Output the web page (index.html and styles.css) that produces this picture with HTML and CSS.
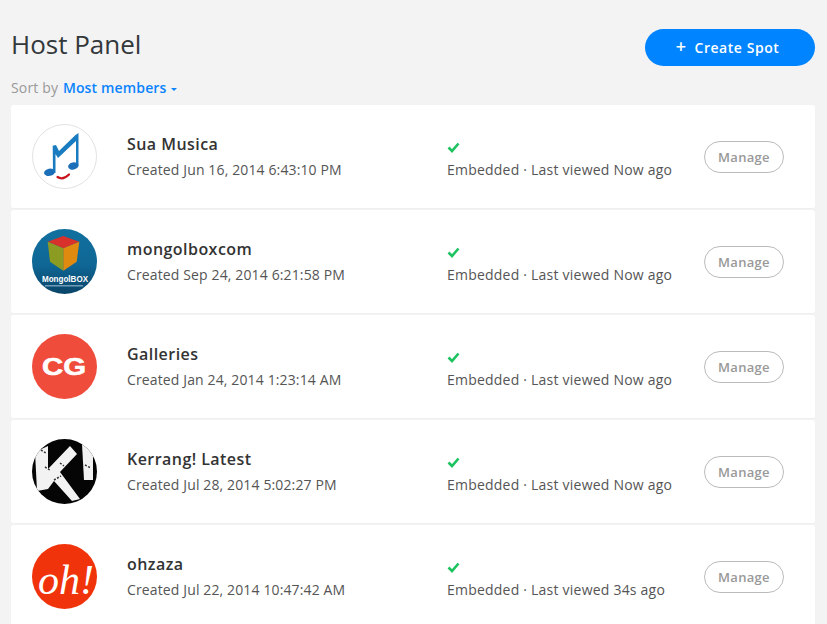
FILE: index.html
```html
<!DOCTYPE html>
<html lang="en">
<head>
<meta charset="utf-8">
<title>Host Panel</title>
<link rel="stylesheet" href="styles.css">
</head>
<body>
<main class="page">
  <header class="top">
    <h1 class="title">Host Panel</h1>
    <button class="create"><span class="plus">+</span>Create Spot</button>
  </header>
  <div class="sort">Sort by <a class="sort-link">Most members</a><span class="caret"></span></div>
  <ul class="list">
    <li class="card">
      <svg class="avatar" viewBox="0 0 65 65">
        <circle cx="32.5" cy="32.5" r="32" fill="#fff" stroke="#e2e2e2"/>
        <path d="M20.700 21.700 L24 21 L27 27 L43.500 11 L46.500 9 L46.500 42 L44 42 L44 17 L26 34 L23.500 30 L23.500 49 L21 49 Z" fill="#1a7cc0"/>
        <ellipse cx="17.500" cy="48.300" rx="5.500" ry="3.600" fill="#1a6fb8" transform="rotate(-10 17.500 48.300)"/>
        <ellipse cx="41.300" cy="42" rx="5.200" ry="3.600" fill="#1a6fb8" transform="rotate(-10 41.300 42)"/>
        <path d="M25.500 53 Q31 56.500 37 50.500" fill="none" stroke="#c8141c" stroke-width="2.200" stroke-linecap="round"/>
      </svg>
      <div class="info"><h2 class="name">Sua Musica</h2><p class="meta">Created Jun 16, 2014 6:43:10 PM</p></div>
      <div class="status"><svg class="check" viewBox="0 0 13 11"><path d="M1.500 5.500 L5 9 L11.500 1.500" fill="none" stroke="#1cc35f" stroke-width="2.600"/></svg><p class="meta">Embedded · Last viewed Now ago</p></div>
      <button class="manage">Manage</button>
    </li>
    <li class="card">
      <svg class="avatar" viewBox="0 0 65 65">
        <defs><linearGradient id="mb" x1="0" y1="0" x2="0" y2="1"><stop offset="0" stop-color="#11709f"/><stop offset="0.55" stop-color="#0f6795"/><stop offset="1" stop-color="#0a4468"/></linearGradient></defs>
        <circle cx="32.500" cy="32.500" r="32.500" fill="url(#mb)"/>
        <path d="M15.700 12.700 L31.300 7 L47.300 12.700 L31.300 19.300 Z" fill="#d8302a"/>
        <path d="M15.700 12.700 L31.300 19.300 L31.300 41.700 L18 32.700 Z" fill="#8c9c22"/>
        <path d="M31.300 19.300 L47.300 12.700 L44.700 32.700 L31.300 41.700 Z" fill="#e08a10"/>
        <text class="logo-mb" x="33" y="52.500" text-anchor="middle" textLength="46" lengthAdjust="spacingAndGlyphs">MongolBOX</text>
        <rect x="13" y="56" width="38" height="1.500" fill="#6f9db8"/>
      </svg>
      <div class="info"><h2 class="name">mongolboxcom</h2><p class="meta">Created Sep 24, 2014 6:21:58 PM</p></div>
      <div class="status"><svg class="check" viewBox="0 0 13 11"><path d="M1.500 5.500 L5 9 L11.500 1.500" fill="none" stroke="#1cc35f" stroke-width="2.600"/></svg><p class="meta">Embedded · Last viewed Now ago</p></div>
      <button class="manage">Manage</button>
    </li>
    <li class="card">
      <svg class="avatar" viewBox="0 0 65 65">
        <circle cx="32.500" cy="32.500" r="32.500" fill="#ef4c3c"/>
        <text class="logo-cg" x="32" y="41" text-anchor="middle" textLength="44" lengthAdjust="spacingAndGlyphs">CG</text>
      </svg>
      <div class="info"><h2 class="name">Galleries</h2><p class="meta">Created Jan 24, 2014 1:23:14 AM</p></div>
      <div class="status"><svg class="check" viewBox="0 0 13 11"><path d="M1.500 5.500 L5 9 L11.500 1.500" fill="none" stroke="#1cc35f" stroke-width="2.600"/></svg><p class="meta">Embedded · Last viewed Now ago</p></div>
      <button class="manage">Manage</button>
    </li>
    <li class="card">
      <svg class="avatar" viewBox="0 0 65 65">
        <defs><clipPath id="kc"><circle cx="32.500" cy="32.500" r="32.500"/></clipPath></defs>
        <g clip-path="url(#kc)">
          <rect width="65" height="65" fill="#050505"/>
          <path d="M3 13 L16 7 L16 30 L38 7 L45 15 L28 33 L48 60 L40 62 L22 42 L16 50 L5 52 Z" fill="#f2f2f2"/>
          <path d="M50 5 L61 5 L61 41 L52 41 Z" fill="#f2f2f2"/>
          <path d="M9 11 L14 14 M13 28 L18 31 M28 24 L32 27 M22 41 L29 37 M53 26 L59 29" stroke="#333" stroke-width="1.500" stroke-dasharray="2 1.500"/>
        </g>
      </svg>
      <div class="info"><h2 class="name">Kerrang! Latest</h2><p class="meta">Created Jul 28, 2014 5:02:27 PM</p></div>
      <div class="status"><svg class="check" viewBox="0 0 13 11"><path d="M1.500 5.500 L5 9 L11.500 1.500" fill="none" stroke="#1cc35f" stroke-width="2.600"/></svg><p class="meta">Embedded · Last viewed Now ago</p></div>
      <button class="manage">Manage</button>
    </li>
    <li class="card">
      <svg class="avatar" viewBox="0 0 65 65">
        <circle cx="32.500" cy="32.500" r="32.500" fill="#f0330a"/>
        <text class="logo-oh" x="6" y="50">oh!</text>
      </svg>
      <div class="info"><h2 class="name">ohzaza</h2><p class="meta">Created Jul 22, 2014 10:47:42 AM</p></div>
      <div class="status"><svg class="check" viewBox="0 0 13 11"><path d="M1.500 5.500 L5 9 L11.500 1.500" fill="none" stroke="#1cc35f" stroke-width="2.600"/></svg><p class="meta">Embedded · Last viewed 34s ago</p></div>
      <button class="manage">Manage</button>
    </li>
  </ul>
</main>
</body>
</html>
```
FILE: styles.css
```css
* { box-sizing: border-box; }
html, body { margin: 0; height: 100%; overflow: hidden; }
body {
  background: #f3f3f3;
  font-family: "Open Sans", "Liberation Sans", sans-serif;
  color: #333;
}
.page { padding: 29px 12px 0 11px; }
.top {
  display: flex;
  justify-content: space-between;
  align-items: flex-start;
  height: 37px;
}
.title {
  margin: 0;
  font-size: 26px;
  font-weight: 400;
  color: #33383b;
  line-height: 30px;
}
.create {
  width: 170px;
  height: 37px;
  border: 0;
  border-radius: 19px;
  background: #0084ff;
  color: #fff;
  font: 600 14px "Open Sans", sans-serif;
  letter-spacing: 0.55px;
  padding: 0 5px 2px 0;
}
.plus { font-size: 18px; font-weight: 600; line-height: 18px; margin-right: 8px; }
.sort {
  margin-top: 12px;
  height: 27px;
  font-size: 14px;
  line-height: 20px;
  letter-spacing: 0.15px;
  color: #999;
}
.sort-link { color: #0a84ff; font-weight: 600; margin-left: 1px; }
.caret {
  display: inline-block;
  margin-left: 4px;
  vertical-align: middle;
  border-left: 3px solid transparent;
  border-right: 3px solid transparent;
  border-top: 3px solid #0a84ff;
}
.list { list-style: none; margin: 0; padding: 0; }
.card {
  display: flex;
  align-items: flex-start;
  height: 104px;
  margin-bottom: 1px;
  padding: 19px 31px 0 21px;
  background: #fff;
  border-radius: 3px;
  border-bottom: 1px solid #efefef;
}
.avatar { width: 65px; height: 65px; flex: none; }
.info { width: 320px; margin-left: 30px; padding-top: 7px; }
.name {
  margin: 0;
  font-size: 16px;
  font-weight: 600;
  letter-spacing: 0.45px;
  line-height: 26px;
  color: #333;
}
.meta {
  margin: 0;
  font-size: 14px;
  line-height: 20px;
  color: #555;
  white-space: nowrap;
}
.info .meta { margin-top: 3px; letter-spacing: 0.13px; }
.status { width: 257px; padding-top: 18px; }
.status .meta { letter-spacing: 0.22px; }
.check { display: block; width: 13px; height: 11px; margin-bottom: 7px; }
.manage {
  width: 80px;
  height: 32px;
  margin-top: 17px;
  padding: 0;
  border: 1px solid #bbb;
  border-radius: 16px;
  background: #fff;
  color: #999;
  font: 600 13px "Open Sans", sans-serif;
  letter-spacing: 0.3px;
}
.logo-mb { font: 700 9.500px "Liberation Sans", sans-serif; fill: #fff; }
.logo-cg { font: 700 24px "Liberation Sans", sans-serif; fill: #fff; stroke: #fff; stroke-width: .6px; }
.logo-oh { font: italic 400 42px "Liberation Serif", serif; fill: #fff; }
```
